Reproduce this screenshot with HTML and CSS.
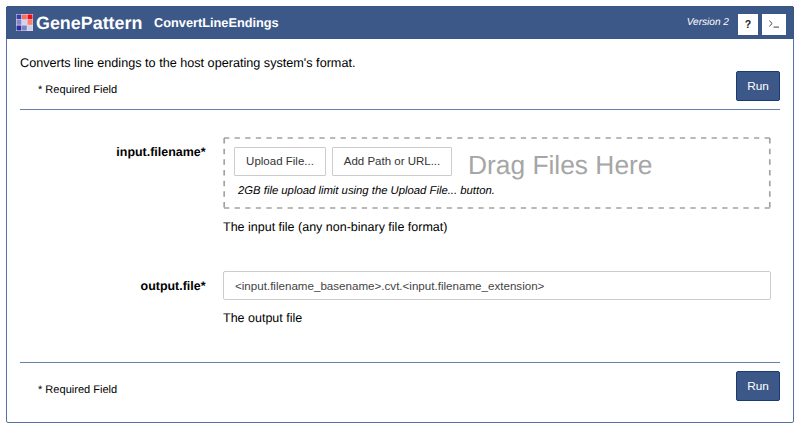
FILE: index.html
```html
<!DOCTYPE html>
<html lang="en">
<head>
<meta charset="utf-8">
<title>ConvertLineEndings</title>
<link rel="stylesheet" href="styles.css">
</head>
<body>
<main class="panel">
  <header class="bar">
    <svg class="logo" viewBox="0 0 17 17" aria-hidden="true">
      <rect width="17" height="17" fill="#dfe0f0"/>
      <rect x="0.5" y="0.5" width="4.8" height="4.8" fill="#3d3da6"/>
      <rect x="6" y="0.5" width="4.8" height="4.8" fill="#f5705f"/>
      <rect x="11.5" y="0.5" width="5" height="4.8" fill="#f50d14"/>
      <rect x="0.5" y="6" width="4.8" height="4.8" fill="#8585c5"/>
      <rect x="6" y="6" width="4.8" height="4.8" fill="#d3d3ee"/>
      <rect x="11.5" y="6" width="5" height="4.8" fill="#fb8269"/>
      <rect x="0.5" y="11.5" width="4.8" height="5" fill="#2c2c9a"/>
      <rect x="6" y="11.5" width="4.8" height="5" fill="#8080c4"/>
      <rect x="11.5" y="11.5" width="5" height="5" fill="#cfcfe8"/>
    </svg>
    <span class="brand">GenePattern</span>
    <h1 class="title">ConvertLineEndings</h1>
    <span class="version">Version 2</span>
    <button class="tool">?</button>
    <button class="tool" aria-label="Code">
      <svg width="12" height="10" viewBox="0 0 12 10" fill="none" stroke="#444"><path d="M1.3 1.7 4.2 4.5 1.3 7.3M5.5 8.1H11"/></svg>
    </button>
  </header>
  <div class="content">
    <p class="description">Converts line endings to the host operating system's format.</p>
    <div class="actions top">
      <span class="required">* Required Field</span>
      <button class="run">Run</button>
    </div>
    <section class="form">
      <div class="row first">
        <label class="label">input.filename*</label>
        <div class="field">
          <div class="drop">
            <svg class="outline" width="548" height="72" viewBox="0 0 548 72" fill="none" stroke="#a3a3a3" stroke-width="1.7" aria-hidden="true">
              <path class="dash-x" d="M1 1H547.5M1 71H547.5"/>
              <path class="dash-y" d="M1.2 1V72M546.8 1V72"/>
            </svg>
            <div class="choices">
              <button class="btn upload">Upload File...</button>
              <button class="btn path">Add Path or URL...</button>
              <span class="drag">Drag Files Here</span>
            </div>
            <p class="limit">2GB file upload limit using the Upload File... button.</p>
          </div>
          <p class="help">The input file (any non-binary file format)</p>
        </div>
      </div>
      <div class="row second">
        <label class="label" for="output">output.file*</label>
        <div class="field">
          <input class="input" id="output" value="&lt;input.filename_basename&gt;.cvt.&lt;input.filename_extension&gt;">
          <p class="help">The output file</p>
        </div>
      </div>
    </section>
    <div class="actions bottom">
      <span class="required">* Required Field</span>
      <button class="run">Run</button>
    </div>
  </div>
</main>
</body>
</html>
```
FILE: styles.css
```css
* { box-sizing: border-box; }
body {
  margin: 0;
  padding: 6px;
  height: 432px;
  background: #fff;
  color: #000;
  font: 12.5px/18px "Liberation Sans", Arial, sans-serif;
  text-rendering: geometricPrecision;
}
h1, p { margin: 0; }
button, input { font-family: inherit; margin: 0; padding: 0; }
.panel {
  height: 417px;
  border: 1px solid #5672a4;
  border-radius: 2px;
}
.bar {
  display: flex;
  align-items: center;
  height: 33px;
  margin: -1px -1px 0;
  padding: 0 7px 0 10px;
  background: #3c5888;
  border: 1px solid #3a5685;
  border-radius: 2px 2px 0 0;
  color: #fff;
}
.logo { width: 17px; height: 17px; margin: 0 3px 0 -1px; }
.brand { width: 118px; font-size: 17.9px; font-weight: bold; }
.title { font-size: 12.75px; font-weight: bold; }
.version { margin-left: auto; margin-right: 9px; font-size: 10.1px; font-style: italic; }
.tool {
  display: flex;
  align-items: center;
  justify-content: center;
  width: 20px;
  height: 21px;
  margin-top: 3px;
  background: #fff;
  border: 0;
  color: #222;
  font-size: 10.5px;
  font-weight: bold;
}
.tool + .tool { width: 24px; margin-left: 4px; }
.content { padding: 15px 13px 0 13px; }
.description { height: 17px; font-size: 12.65px; }
.actions { display: flex; justify-content: space-between; padding-left: 18px; }
.required { font-size: 11.05px; }
.top { height: 38px; }
.top .required { padding-top: 10px; }
.run {
  width: 44px;
  height: 30px;
  background: #3c5888;
  border: 1px solid #1c3b70;
  border-radius: 2px;
  color: #fff;
  font-size: 11.8px;
}
.form {
  height: 254px;
  border-top: 1px solid #6780ac;
  border-bottom: 1px solid #6780ac;
}
.row { display: grid; grid-template-columns: 185.5px 548px; column-gap: 17.5px; }
.first { padding-top: 27px; }
.second { padding-top: 35px; }
.label { text-align: right; font-size: 12.45px; font-weight: bold; padding-top: 6px; }
.drop {
  position: relative;
  height: 72px;
  padding: 9px 11px;
}
.outline { position: absolute; top: 0; left: 0; pointer-events: none; }
.dash-x { stroke-dasharray: 5.3 5.3; }
.dash-y { stroke-dasharray: 5.5 5.17; }
.choices { display: flex; align-items: center; height: 30px; }
.btn {
  height: 29px;
  background: #fff;
  border: 1px solid #ccc;
  border-radius: 1px;
  color: #333;
  font-size: 11.5px;
}
.upload { width: 92px; }
.path { width: 120px; margin-left: 6px; }
.drag { margin: 8px 0 0 16px; font-size: 26.35px; color: #a6a6a6; }
.limit { margin: 6px 0 0 4px; font-size: 11.3px; font-style: italic; }
.help { margin-top: 9px; }
.input {
  display: block;
  width: 548px;
  height: 29px;
  padding: 0 11px;
  border: 1px solid #ccc;
  border-radius: 2px;
  color: #444;
  font-size: 11.6px;
}
.bottom { padding-top: 8px; }
.bottom .required { padding-top: 10px; }
```
